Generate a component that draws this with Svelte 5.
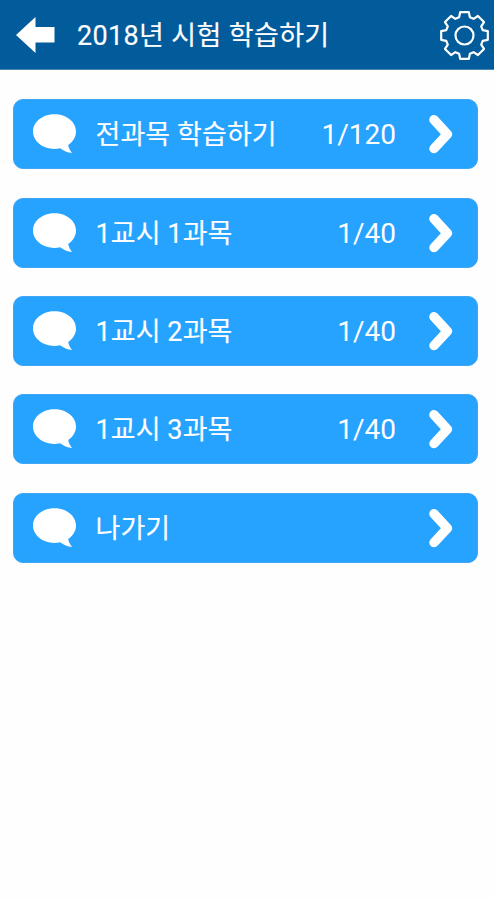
<script lang="ts">
  type Item = { label: string; progress?: string };

  const items: Item[] = [
    { label: '전과목 학습하기', progress: '1/120' },
    { label: '1교시 1과목', progress: '1/40' },
    { label: '1교시 2과목', progress: '1/40' },
    { label: '1교시 3과목', progress: '1/40' },
    { label: '나가기' },
  ];

  // [radius, angle offset] of the four corners of one gear tooth
  const tooth = [
    [19, -16.5],
    [23.7, -10.5],
    [23.7, 10.5],
    [19, 16.5],
  ];

  const gear = Array.from({ length: 8 }, (_, i) =>
    tooth.map(([r, offset]) => {
      const a = ((i * 45 + offset) * Math.PI) / 180;
      return `${(24.5 + r * Math.sin(a)).toFixed(2)},${(24.5 - r * Math.cos(a)).toFixed(2)}`;
    }).join(' ')
  ).join(' ');
</script>

<div class="screen">
  <header>
    <button class="back" aria-label="뒤로">
      <svg width="39" height="38" viewBox="0 0 39 38">
        <path d="M0 18 L19.5 0 V10 H38.5 V25.5 H19.5 V36 Z" fill="#fff" />
      </svg>
    </button>
    <h1>2018년 시험 학습하기</h1>
    <button class="settings" aria-label="설정">
      <svg width="50" height="50" viewBox="0 0 50 50" fill="none" stroke="#fff" stroke-width="2.2" stroke-linejoin="round">
        <polygon points={gear} />
        <circle cx="24.5" cy="24.5" r="9" />
      </svg>
    </button>
  </header>

  <main>
    {#each items as item}
      <button class="item">
        <svg class="bubble" width="44" height="40" viewBox="0 0 44 40">
          <path
            d="M21.5 0.2 C33.5 0.2 43 7.8 43 17.5 C43 23 40 27.8 35.2 31 C35.8 34 37 36.5 39 39 C34.5 38.6 30.5 36.8 27.2 34.2 C25.4 34.7 23.5 34.9 21.5 34.9 C9.5 34.9 0 27.2 0 17.5 C0 7.8 9.5 0.2 21.5 0.2 Z"
            fill="#fff"
          />
        </svg>
        <span class="label">{item.label}</span>
        {#if item.progress}
          <span class="progress">{item.progress}</span>
        {/if}
        <svg class="chevron" width="26" height="40" viewBox="0 0 26 40">
          <path
            d="M6 5.8 L19.3 20.2 L6 34.6"
            fill="none"
            stroke="#fff"
            stroke-width="9.5"
            stroke-linecap="round"
            stroke-linejoin="round"
          />
        </svg>
      </button>
    {/each}
  </main>
</div>

<style>
  :global(body) {
    background: #fefefe;
  }

  .screen {
    min-height: 900px;
    font-family: Roboto, 'Noto Sans CJK KR', sans-serif;
    color: #fff;
  }

  button {
    padding: 0;
    border: 0;
    background: none;
    color: inherit;
    font: inherit;
  }

  svg {
    display: block;
    flex: none;
  }

  header {
    display: flex;
    align-items: center;
    box-sizing: border-box;
    height: 70px;
    padding: 2px 4px 0 16px;
    background: #025b9b;
    border-bottom: 1px solid #4a86b5;
  }

  h1 {
    flex: 1;
    margin: 0 0 0 22px;
    font-size: 27px;
    font-weight: 400;
    line-height: 40px;
    letter-spacing: 0.35px;
    white-space: nowrap;
    -webkit-text-stroke: 0.15px #fff;
  }

  main {
    display: flex;
    flex-direction: column;
    gap: 28.4px;
    padding: 29.2px 16px 0 13px;
  }

  .item {
    display: flex;
    align-items: center;
    box-sizing: border-box;
    height: 70px;
    padding: 0 23px 0 19px;
    border: 1px solid #3fa6f5;
    border-radius: 10px;
    background: #26a2ff;
  }

  .label {
    flex: 1;
    margin-left: 18.5px;
    padding-top: 2px;
    font-size: 27px;
    line-height: 40px;
    letter-spacing: 0.08px;
    text-align: left;
    white-space: nowrap;
    -webkit-text-stroke: 0.15px #fff;
  }

  .progress {
    margin-right: 32px;
    padding-top: 2px;
    font-size: 28px;
    line-height: 40px;
  }
</style>
